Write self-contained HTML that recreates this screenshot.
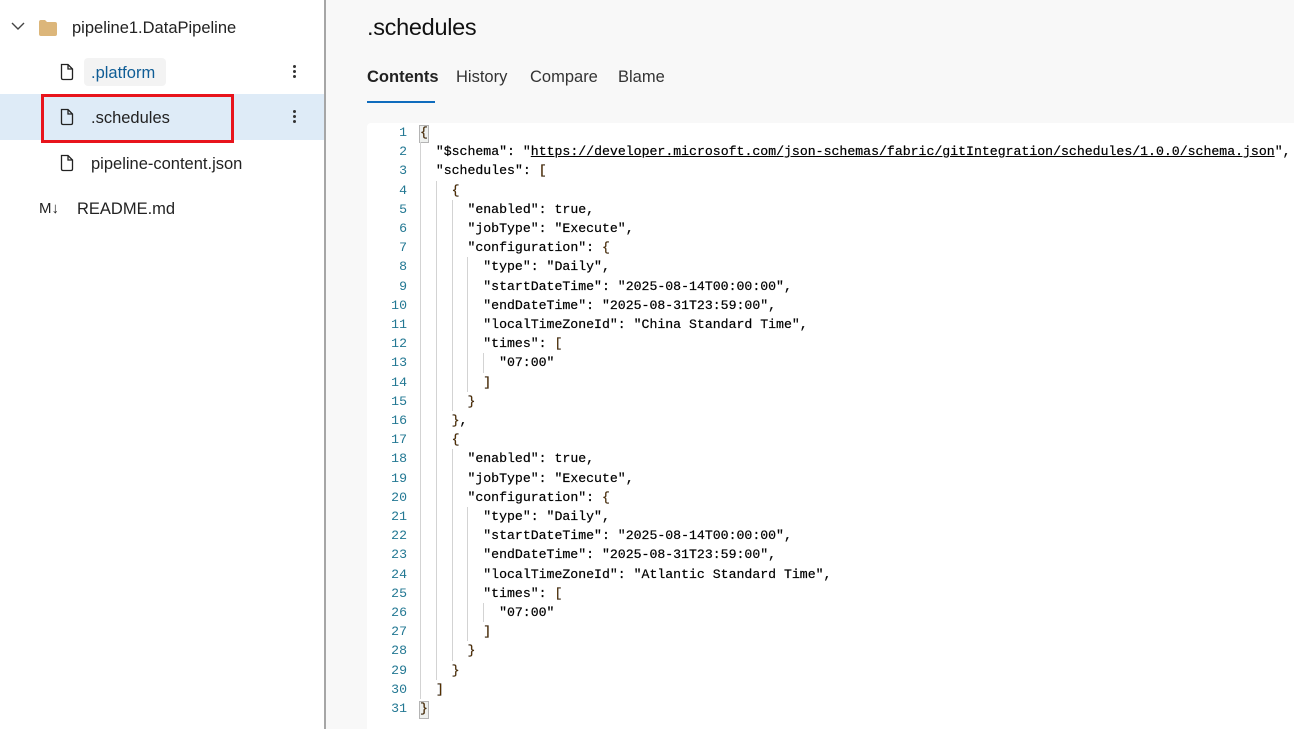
<!DOCTYPE html>
<html><head><meta charset="utf-8"><style>
*{margin:0;padding:0;box-sizing:border-box}
body{width:1294px;height:729px;overflow:hidden;background:#f8f8f8;font-family:"Liberation Sans",sans-serif;position:relative}
#side{position:absolute;left:0;top:0;width:326px;height:729px;background:#fff;border-right:2px solid #a6a6a6}
.row{position:absolute;left:0;width:324px;height:46px;font-size:16.5px;color:#222}
.row .t{position:absolute;top:15px}
.sel{background:#deebf7}
.dots{position:absolute;left:293px;top:16px;width:3px}
.dots i{display:block;width:3px;height:3px;background:#333;border-radius:50%;margin-bottom:2px}
#red{position:absolute;left:41px;top:94px;width:193px;height:49px;border:3px solid #e8141c}
h1{position:absolute;left:367px;top:14px;font-size:23.5px;font-weight:normal;color:#111;letter-spacing:-0.3px}
.tab{position:absolute;top:68px;font-size:16.5px;color:#333}
#code{position:absolute;left:367px;top:123px;width:927px;height:606px;background:#fff;border-radius:4px 0 0 0;font-family:"Liberation Mono",monospace;font-size:13.2px;color:#000}
.l{position:absolute;left:0;height:19.2px;line-height:19.2px;white-space:pre}
.n{position:absolute;width:40px;text-align:right;color:#237893}
.c{position:absolute;left:53px;-webkit-text-stroke:0.2px #000}
.g{display:inline-block;width:2ch;height:19.2px;vertical-align:top;border-left:1px solid #d3d3d3}
.b{color:#5c3300}
</style></head><body>
<div id="side">
 <div class="row" style="top:4px">
  <svg style="position:absolute;left:11px;top:17px" width="14" height="10"><path d="M1 2 L7 8 L13 2" fill="none" stroke="#444" stroke-width="1.4"/></svg>
  <svg style="position:absolute;left:39px;top:16px" width="18" height="16"><path d="M0 2 Q0 0 2 0 L6 0 L8 2 L16 2 Q18 2 18 4 L18 14 Q18 16 16 16 L2 16 Q0 16 0 14Z" fill="#dcb67a"/></svg>
  <span class="t" style="left:72px">pipeline1.DataPipeline</span>
 </div>
 <div class="row" style="top:49px">
  <svg style="position:absolute;left:60px;top:14px" width="14" height="18"><path d="M1.5 1.5 H8 L12.5 6 V15 Q12.5 16.5 11 16.5 H3 Q1.5 16.5 1.5 15Z M8 1.5 V6 H12.5" fill="none" stroke="#222" stroke-width="1.3"/></svg>
  <div style="position:absolute;left:84px;top:9px;width:82px;height:28px;background:#f3f3f3;border-radius:4px"></div>
  <span class="t" style="left:91px;color:#0f5d96">.platform</span>
  <div class="dots"><i></i><i></i><i></i></div>
 </div>
 <div class="row sel" style="top:94px">
  <svg style="position:absolute;left:60px;top:14px" width="14" height="18"><path d="M1.5 1.5 H8 L12.5 6 V15 Q12.5 16.5 11 16.5 H3 Q1.5 16.5 1.5 15Z M8 1.5 V6 H12.5" fill="none" stroke="#222" stroke-width="1.3"/></svg>
  <span class="t" style="left:91px">.schedules</span>
  <div class="dots"><i></i><i></i><i></i></div>
 </div>
 <div class="row" style="top:140px">
  <svg style="position:absolute;left:60px;top:14px" width="14" height="18"><path d="M1.5 1.5 H8 L12.5 6 V15 Q12.5 16.5 11 16.5 H3 Q1.5 16.5 1.5 15Z M8 1.5 V6 H12.5" fill="none" stroke="#222" stroke-width="1.3"/></svg>
  <span class="t" style="left:91px">pipeline-content.json</span>
 </div>
 <div class="row" style="top:185px">
  <span class="t" style="left:39px;font-size:15px">M&#8595;</span>
  <span class="t" style="left:77px">README.md</span>
 </div>
 <div id="red"></div>
</div>
<h1>.schedules</h1>
<div class="tab" style="left:367px;font-weight:bold;color:#222">Contents</div>
<div style="position:absolute;left:367px;top:101px;width:68px;height:2px;background:#0f6cbd"></div>
<div class="tab" style="left:456px">History</div>
<div class="tab" style="left:530px">Compare</div>
<div class="tab" style="left:618px">Blame</div>
<div id="code">
<div style="position:absolute;left:52px;top:2px;width:10px;height:18px;border:1px solid #b4b4b4;background:#eef0ee"></div>
<div style="position:absolute;left:52px;top:578px;width:10px;height:18px;border:1px solid #b4b4b4;background:#eef0ee"></div>
<div id="lines"></div>
</div>
<script>
var L=[
'{',
'  "$schema": "<u>https://developer.microsoft.com/json-schemas/fabric/gitIntegration/schedules/1.0.0/schema.json</u>",',
'  "schedules": [',
'    {',
'      "enabled": true,',
'      "jobType": "Execute",',
'      "configuration": {',
'        "type": "Daily",',
'        "startDateTime": "2025-08-14T00:00:00",',
'        "endDateTime": "2025-08-31T23:59:00",',
'        "localTimeZoneId": "China Standard Time",',
'        "times": [',
'          "07:00"',
'        ]',
'      }',
'    },',
'    {',
'      "enabled": true,',
'      "jobType": "Execute",',
'      "configuration": {',
'        "type": "Daily",',
'        "startDateTime": "2025-08-14T00:00:00",',
'        "endDateTime": "2025-08-31T23:59:00",',
'        "localTimeZoneId": "Atlantic Standard Time",',
'        "times": [',
'          "07:00"',
'        ]',
'      }',
'    }',
'  ]',
'}'];
var h='';
L.forEach(function(s,i){
 var m=s.match(/^ */)[0].length, d=m/2, rest=s.slice(m);
 rest=rest.replace(/[\[\]{}]/g,function(c){return '<span class="b">'+c+'</span>'});
 var g='';for(var k=0;k<d;k++)g+='<span class="g"></span>';
 h+='<div class="l" style="top:'+(0+i*19.2)+'px"><span class="n">'+(i+1)+'</span><span class="c">'+g+rest+'</span></div>';
});
document.getElementById('lines').innerHTML=h;
</script>
</body></html>
